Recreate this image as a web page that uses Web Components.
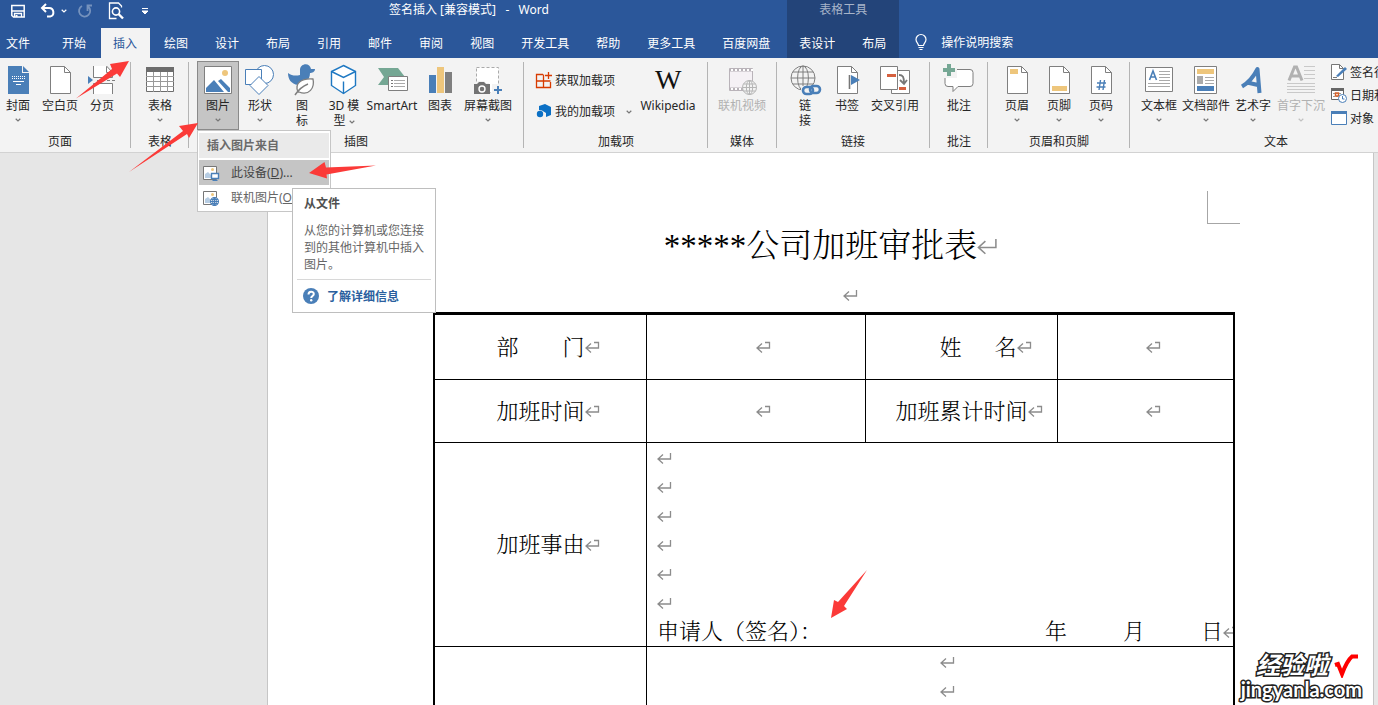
<!DOCTYPE html>
<html lang="zh-CN">
<head>
<meta charset="utf-8">
<title>签名插入 [兼容模式] - Word</title>
<style>
html, body { margin: 0; height: 100%; overflow: hidden; }
body { font: 12px/15px "Noto Sans", "Noto Sans CJK SC", sans-serif; color: #262626; background: #e6e6e6; }
</style>
</head>
<body>
<word-app></word-app>

<template id="app-template">
  <style>
    :host { display: flex; flex-direction: column; height: 100vh; min-height: 0; position: relative; overflow: hidden; }
    header { display: flex; background: #2b579a; color: #fff; flex: none; }
    .section { display: flex; flex-direction: column; }
    .main { padding-right: 4px; }
    .context { background: #234479; }
    .bar { height: 28px; display: flex; align-items: flex-start; }
    .tools { display: flex; align-items: center; height: 22px; width: 389px; flex: none; }
    .tools button { border: 0; padding: 0; background: none; display: flex; color: #fff; }
    .save { margin-left: 10px; }
    .undo { margin-left: 14px; }
    .undo-more { margin-left: 5px; }
    .redo { margin-left: 10px; opacity: .35; }
    .preview { margin-left: 14px; }
    .custom { margin-left: 16px; }
    h1 { margin: 0; font: inherit; line-height: 20px; white-space: pre; }
    .context .bar { justify-content: center; line-height: 20px; color: #a7b4c9; }
    nav { display: flex; gap: 2px; height: 30px; }
    .search { display: flex; align-items: center; gap: 12px; margin: 28px 0 0 14px; height: 28px; border: 0; padding: 0; background: none; color: #fff; font: inherit; }
    .ribbon { display: flex; flex: none; background: #f3f3f3; border-bottom: 1px solid #d2d2d2; height: 94px; position: relative; z-index: 2; }
    main { flex: 1; min-height: 0; display: flex; padding: 0 4px 0 267px; background: #e6e6e6; }
    .stack { display: flex; flex-direction: column; }
    .addins { gap: 15px; padding: 11px 4px 0 4px; }
    .fields { gap: 7px; padding: 3px 0 0 3px; width: 83px; }
  </style>
  <header>
    <div class="section main">
      <div class="bar">
        <div class="tools">
          <button class="save" aria-label="保存"><ms-icon name="save" size="16"></ms-icon></button>
          <button class="undo" aria-label="撤消"><ms-icon name="undo" size="16"></ms-icon></button>
          <button class="undo-more" aria-label="撤消列表"><ms-icon name="chevron" size="6"></ms-icon></button>
          <button class="redo" aria-label="恢复"><ms-icon name="redo" size="16"></ms-icon></button>
          <button class="preview" aria-label="打印预览"><ms-icon name="preview" size="18"></ms-icon></button>
          <button class="custom" aria-label="自定义快速访问工具栏"><ms-icon name="custom" size="8"></ms-icon></button>
        </div>
        <h1>签名插入 [兼容模式]   -   Word</h1>
      </div>
      <nav>
        <ribbon-tab file>文件</ribbon-tab><ribbon-tab>开始</ribbon-tab><ribbon-tab active>插入</ribbon-tab><ribbon-tab>绘图</ribbon-tab><ribbon-tab>设计</ribbon-tab><ribbon-tab>布局</ribbon-tab><ribbon-tab>引用</ribbon-tab><ribbon-tab>邮件</ribbon-tab><ribbon-tab>审阅</ribbon-tab><ribbon-tab>视图</ribbon-tab><ribbon-tab>开发工具</ribbon-tab><ribbon-tab>帮助</ribbon-tab><ribbon-tab>更多工具</ribbon-tab><ribbon-tab>百度网盘</ribbon-tab>
      </nav>
    </div>
    <div class="section context">
      <div class="bar">表格工具</div>
      <nav><ribbon-tab>表设计</ribbon-tab><ribbon-tab>布局</ribbon-tab></nav>
    </div>
    <button class="search"><ms-icon name="bulb" size="16"></ms-icon><span>操作说明搜索</span></button>
  </header>

  <div class="ribbon">
    <ribbon-group label="页面" style="--pl:0px;--pr:10px">
      <ribbon-button icon="cover" style="--w:36px" menu>封面</ribbon-button>
      <ribbon-button icon="blank" style="--w:48px">空白页</ribbon-button>
      <ribbon-button icon="break" style="--w:36px">分页</ribbon-button>
    </ribbon-group>
    <ribbon-group label="表格" style="--pl:8px">
      <ribbon-button icon="table" menu>表格</ribbon-button>
    </ribbon-group>
    <ribbon-group label="插图" style="--pl:8px;--pr:8px">
      <ribbon-button icon="picture" menu pressed>图片<picture-menu slot="popup"></picture-menu></ribbon-button>
      <ribbon-button icon="shapes" menu>形状</ribbon-button>
      <ribbon-button icon="duck">图<br>标</ribbon-button>
      <ribbon-button icon="cube">3D 模<br>型 <ms-icon name="chevron" size="6"></ms-icon></ribbon-button>
      <ribbon-button icon="smartart" style="--w:54px">SmartArt</ribbon-button>
      <ribbon-button icon="chart">图表</ribbon-button>
      <ribbon-button icon="capture" style="--w:54px" menu>屏幕截图</ribbon-button>
    </ribbon-group>
    <ribbon-group label="加载项" style="--pl:8px">
      <div class="stack addins">
        <ribbon-item icon="store">获取加载项</ribbon-item>
        <ribbon-item icon="addin" menu>我的加载项</ribbon-item>
      </div>
      <ribbon-button icon="wiki" style="--w:64px">Wikipedia</ribbon-button>
    </ribbon-group>
    <ribbon-group label="媒体">
      <ribbon-button icon="video" style="--w:54px" disabled>联机视频</ribbon-button>
    </ribbon-group>
    <ribbon-group label="链接">
      <ribbon-button icon="link">链<br>接</ribbon-button>
      <ribbon-button icon="bookmark">书签</ribbon-button>
      <ribbon-button icon="xref" style="--w:54px">交叉引用</ribbon-button>
    </ribbon-group>
    <ribbon-group label="批注" style="--pl:8px">
      <ribbon-button icon="comment">批注</ribbon-button>
    </ribbon-group>
    <ribbon-group label="页眉和页脚" style="--pl:8px">
      <ribbon-button icon="head" menu>页眉</ribbon-button>
      <ribbon-button icon="foot" menu>页脚</ribbon-button>
      <ribbon-button icon="number" menu>页码</ribbon-button>
    </ribbon-group>
    <ribbon-group label="文本" style="--pl:8px">
      <ribbon-button icon="textbox" menu>文本框</ribbon-button>
      <ribbon-button icon="parts" style="--w:52px" menu>文档部件</ribbon-button>
      <ribbon-button icon="wordart" menu>艺术字</ribbon-button>
      <ribbon-button icon="dropcap" style="--w:54px" menu disabled>首字下沉</ribbon-button>
      <div class="stack fields">
        <ribbon-item icon="sign">签名行</ribbon-item>
        <ribbon-item icon="date">日期和时间</ribbon-item>
        <ribbon-item icon="object">对象</ribbon-item>
      </div>
    </ribbon-group>
  </div>

  <main><doc-page></doc-page></main>
  <red-arrows></red-arrows>
  <site-mark></site-mark>
</template>

<template id="tab-template">
  <style>
    :host { display: block; }
    button { height: 30px; border: 0; margin: 0; padding: 0 13px 0 12px; background: none; color: #fff; font: inherit; white-space: nowrap; display: block; }
    :host([active]) button { background: #f3f3f3; color: #2b579a; }
    :host([file]) button { width: 48px; padding: 0 0 0 6px; text-align: left; }
  </style>
  <button><slot></slot></button>
</template>

<template id="group-template">
  <style>
    :host { display: flex; flex: none; padding: 3px 0 0; }
    section { display: flex; flex-direction: column; padding: 0 var(--pr, 7px) 0 var(--pl, 7px); }
    .items { display: flex; height: 73px; }
    .caption { text-align: center; white-space: nowrap; }
    .rule { width: 1px; height: 86px; margin-top: 1px; background: #b4b4b4; }
  </style>
  <section><div class="items"><slot></slot></div><div class="caption"></div></section>
  <div class="rule"></div>
</template>

<template id="button-template">
  <style>
    :host { display: block; position: relative; width: var(--w, 42px); height: 69px; }
    button { box-sizing: border-box; width: 100%; height: 69px; margin: 0; padding: 2px 0 0; border: 1px solid transparent; background: none; color: inherit; font: inherit; display: flex; flex-direction: column; align-items: center; white-space: nowrap; }
    :host([pressed]) button { background: #c5c5c5; border-color: #8a8a8a; }
    :host([disabled]) button { color: #b1b1b1; }
    .label { margin-top: 2px; }
    .chevron { display: flex; height: 14px; align-items: center; color: #777; }
    :host([disabled]) .chevron { color: #c1c1c1; }
    ::slotted(ms-icon) { color: #777; }
  </style>
  <button><ms-icon size="32"></ms-icon><span class="label"><slot></slot></span></button>
  <slot name="popup"></slot>
</template>

<template id="item-template">
  <style>
    :host { display: block; }
    button { display: flex; align-items: center; height: 16px; gap: 3px; border: 0; margin: 0; padding: 0; background: none; color: inherit; font: inherit; white-space: nowrap; }
    .chevron { margin-left: 8px; color: #777; }
  </style>
  <button><ms-icon size="16"></ms-icon><span><slot></slot></span></button>
</template>

<template id="menu-template">
  <style>
    :host { position: absolute; left: 0; top: 69px; width: 134px; box-sizing: border-box; display: block; background: #fff; border: 1px solid #c6c6c6; padding: 2px 1px 1px; z-index: 5; color: #444; }
    .head { background: #eaeaea; height: 25px; line-height: 25px; padding-left: 8px; margin-bottom: 2px; font-weight: bold; color: #6a6a6a; }
    button { display: flex; align-items: center; gap: 12px; width: 100%; height: 25px; padding: 0 4px; border: 0; background: none; font: inherit; color: #666; white-space: nowrap; }
    button.hot { background: #c5c5c5; color: #444; }
  </style>
  <div class="head">插入图片来自</div>
  <button class="hot"><ms-icon name="device" size="16"></ms-icon><span>此设备(<u>D</u>)...</span></button>
  <button><ms-icon name="online" size="16"></ms-icon><span>联机图片(<u>O</u>)</span></button>
  <screen-tip></screen-tip>
</template>

<template id="tip-template">
  <style>
    :host { position: absolute; left: 94px; top: 57px; width: 144px; height: 125px; box-sizing: border-box; display: block; background: #fff; border: 1px solid #bebebe; padding: 7px 4px 0; color: #666; }
    h2 { font: inherit; font-weight: bold; margin: 0 7px; color: #505050; }
    p { margin: 11px 0 6px 7px; width: 120px; line-height: 17px; }
    footer { border-top: 1px solid #d8d8d8; padding: 8px 0 0 6px; }
    a { display: flex; align-items: center; gap: 8px; color: #2a5f9e; font-weight: bold; text-decoration: none; }
  </style>
  <h2>从文件</h2>
  <p>从您的计算机或您连接到的其他计算机中插入图片。</p>
  <footer><a href="#help"><ms-icon name="help" size="16"></ms-icon>了解详细信息</a></footer>
</template>

<template id="page-template">
  <style>
    :host { display: block; flex: 1; min-width: 0; overflow: hidden; background: #fff; border: solid #c6c6c6; border-width: 0 1px; padding-top: 38px; color: #000; font: 22px/29px "Liberation Serif", "Noto Serif CJK SC", "Noto Sans CJK SC", serif; font-weight: 300; }
    .corner { width: 32px; height: 32px; margin: 0 133px 0 auto; border: solid #a6a6a6; border-width: 0 0 1px 1px; }
    h1 { font-size: 33px; line-height: 44px; height: 44px; font-weight: 300; margin: 0; text-align: center; }
    .empty { height: 29px; margin: 12px 0 3px; text-align: center; }
    .sheet { padding: 0 138px 0 165px; }
    table { width: 100%; table-layout: fixed; border-collapse: separate; border-spacing: 0; border: solid #000; border-width: 3px 2px 0; }
    td, th { padding: 0; border: solid #000; border-width: 0 1px 1px 0; text-align: center; font-weight: 300; box-sizing: border-box; white-space: nowrap; overflow: hidden; }
    tr > :last-child { border-right: 0; }
    .r1 { height: 65px; } .r2 { height: 63px; } .r3 { height: 204px; } .r4 { height: 204px; }
    .reason { text-align: left; padding: 0 10px; }
    .reason div { height: 29px; }
    .reason .sign { display: flex; justify-content: space-between; }
    .date { display: flex; gap: 56px; }
    .top { vertical-align: top; }
    .top div { height: 29px; }
  </style>
  <div class="corner"></div>
  <h1>*****公司加班审批表<para-mark size="large"></para-mark></h1>
  <div class="empty">&emsp;&emsp;<para-mark></para-mark></div>
  <div class="sheet">
    <table>
      <colgroup><col style="width:212px"><col style="width:219px"><col style="width:192px"><col></colgroup>
      <tr class="r1"><th>部&emsp;&emsp;门<para-mark cell></para-mark></th><td><para-mark cell></para-mark></td><th>&emsp;&ensp;姓&emsp;&ensp;名<para-mark cell></para-mark></th><td><para-mark cell></para-mark></td></tr>
      <tr class="r2"><th>加班时间<para-mark cell></para-mark></th><td><para-mark cell></para-mark></td><th>加班累计时间<para-mark cell></para-mark></th><td><para-mark cell></para-mark></td></tr>
      <tr class="r3"><th>加班事由<para-mark cell></para-mark></th>
        <td class="reason" colspan="3">
          <div><para-mark></para-mark></div><div><para-mark></para-mark></div><div><para-mark></para-mark></div>
          <div><para-mark></para-mark></div><div><para-mark></para-mark></div><div><para-mark></para-mark></div>
          <div class="sign"><span>申请人（签名）：</span><span class="date"><span>年</span><span>月</span><span>日<para-mark cell></para-mark></span></span></div>
        </td></tr>
      <tr class="r4"><th></th><td class="top" colspan="3"><div><para-mark></para-mark></div><div><para-mark></para-mark></div></td></tr>
    </table>
  </div>
</template>

<template id="mark-template">
  <style>
    :host { display: inline-block; width: 0; height: 18px; vertical-align: middle; line-height: 0; }
    svg { display: block; width: 15px; height: 14px; overflow: visible; fill: none; stroke: #8c8c8c; stroke-width: 1.3; }
    :host([size="large"]) { height: 26px; }
    :host([size="large"]) svg { width: 21px; height: 20px; stroke-width: 1.1; }
  </style>
  <svg viewBox="0 0 15 14"></svg>
</template>

<template id="arrows-template">
  <style>
    :host { position: absolute; left: 0; top: 0; pointer-events: none; z-index: 9; }
    svg { display: block; width: 1px; height: 1px; overflow: visible; fill: #fb3a38; }
  </style>
  <svg>
    <path d="M76 98.500 112 69 110 64 129 61 120 77 117 73.500z"/>
    <path d="M129 172 183 131 179 126 198 123 189 138 187 134z"/>
    <path d="M376 165.500 326 167.500 324.500 162 309 173 327 178.500 326.500 174.500z"/>
    <path d="M867 570 838 602 834 600 831 618 847 609 844 606z"/>
  </svg>
</template>

<template id="site-template">
  <style>
    :host { position: absolute; right: 16px; bottom: 6px; z-index: 8; display: flex; flex-direction: column; align-items: flex-end; color: #fff; font-family: "Liberation Sans", "Noto Sans CJK SC", sans-serif; font-weight: bold; -webkit-text-stroke: 3px #222; paint-order: stroke fill; }
    .top { display: flex; align-items: center; gap: 6px; padding-right: 4px; font-size: 24px; line-height: 26px; font-style: italic; }
    svg { width: 24px; height: 24px; fill: none; stroke: #f00; stroke-width: 4; }
    .url { font-family: Lato, "Liberation Sans", sans-serif; font-size: 20px; line-height: 20px; }
  </style>
  <div class="top"><span>经验啦</span><svg viewBox="0 0 24 24"><path d="M1 11 4 10 8 20C11 12 15 5 18 2.500H24"/></svg></div>
  <div class="url">jingyanla.com</div>
</template>

<script>
const B = '#4a7fb8', G = '#7f7f7f', Y = '#eec67c';
const sheet = (extra = '') => `<path d="M6.500 2.500h14l6 6v21h-20z" fill="#fff" stroke="${G}"/><path d="M20.500 2.500v6h6" fill="none" stroke="${G}"/>${extra}`;
const globe = (x, y, r, c, w = 1) => `<g fill="#f3f3f3" stroke="${c}" stroke-width="${w}"><circle cx="${x}" cy="${y}" r="${r}"/><ellipse cx="${x}" cy="${y}" rx="${r * .45}" ry="${r}" fill="none"/><path fill="none" d="M${x - r} ${y}h${2 * r}M${x - r * .86} ${y - r * .5}h${r * 1.72}M${x - r * .86} ${y + r * .5}h${r * 1.72}M${x} ${y - r}v${2 * r}"/></g>`;
const smallPic = `<path d="M.5 1.500h13v13h-13z" fill="#fff" stroke="#777"/><circle cx="9.500" cy="4.500" r="1.500" fill="${Y}"/><path d="M2 13V9l3-2 3 3v3z" fill="#b7cde3"/>`;
const ICONS = {
  save: [16, `<path d="M1.800 2.500h12.400v11.500H3.500L1.800 12.500z" fill="none" stroke="#fff" stroke-width="1.500"/><path d="M2 8h12M4.500 14V10.500h7V14" fill="none" stroke="#fff" stroke-width="1.300"/><path d="M5.500 12h2v2h-2z" fill="#fff"/>`],
  undo: [16, `<path d="M6 1 2 5l4 4M2.500 5H9a4.300 4.300 0 0 1 1 8.500H7" fill="none" stroke="#fff" stroke-width="2"/>`],
  redo: [16, `<path d="M11 3.500A5.600 5.600 0 1 1 5 3M10.500 8V2.500H15" fill="none" stroke="#fff" stroke-width="1.800"/>`],
  preview: [18, `<path d="M14.500 5.500V4l-3-3H2.500v15.500h7" fill="none" stroke="#fff" stroke-width="1.300"/><circle cx="9" cy="9.500" r="3.600" fill="none" stroke="#fff" stroke-width="1.600"/><path d="m11.500 12 4.500 4.500" stroke="#fff" stroke-width="2.400"/>`],
  custom: [8, `<path d="M1 1.500h6M1 4h6L4 7z" stroke="#fff" stroke-width="1" fill="#fff"/>`],
  bulb: [16, `<path d="M5.500 11.500C5.500 9.500 3 8.500 3 5.500a5 5 0 0 1 10 0c0 3-2.500 4-2.500 6zM5.500 13.500h5M6.500 15.500h3" fill="none" stroke="#fff" stroke-width="1.200"/>`],
  chevron: [6, `<path d="M.7 1.800 3 4 5.300 1.800" fill="none" stroke="currentColor" stroke-width="1.200"/>`],
  cover: [32, `<path d="M6 2h14v7h7v21H6z" fill="${B}"/><path d="M21 2v6h6z" fill="${B}"/><path d="M10 12.500h13M10 14.500h13" stroke="#fff" stroke-dasharray="1 1"/><path d="M11 17.500h11M14 20.500h5" stroke="#fff"/>`],
  blank: [32, sheet()],
  break: [32, `<path d="M7.500 2v11.500h19V8.500l-6-6.500z" fill="#fff"/><path d="M7.500 2v11.500h19V8.500l-6-6.500M20.500 2.500v6h6M7.500 30V19.500h19V30" fill="none" stroke="${G}"/><path d="M8 20h18v10H8z" fill="#fff"/><path d="M11 16.500h19" stroke="${G}" stroke-dasharray="3 2"/><path d="M2 12v8l5-4z" fill="${B}"/>`],
  table: [32, `<path d="M2.500 3.500h27v24h-27z" fill="#fff" stroke="#6d6d6d"/><path d="M2 3h28v5H2z" fill="#6d6d6d"/><path d="M2 12.500h28M2 17.500h28M2 22.500h28M9.500 8v20M16.500 8v20M23.500 8v20" stroke="#9a9a9a"/>`],
  picture: [32, `<path d="M2.500 2.500h27v27h-27z" fill="#fff" stroke="${G}"/><circle cx="23" cy="9" r="3" fill="${Y}"/><path d="M4 28v-4l8-8 10 12zM16 17l3-2 9 9v4h-2z" fill="${B}"/>`],
  shapes: [32, `<g fill="#fff" stroke="${B}"><circle cx="20.500" cy="10.500" r="9"/><path d="M1.500 5.500h16v15h-16z"/><path d="m15 12.500 9 9-9 9-9-9z"/></g>`],
  duck: [32, `<path d="M14 6c0-7 10-8 11-1l4 0c0 3-3 4-5 4 0 7-6 13-12 12C5 20 2 15 2 9c4 3 8 3 12 2z" fill="${B}"/><path d="M12 28c-4-9 4-14 15-13 2 9-4 17-14 13z" fill="#fff" stroke="${G}" stroke-width="1.300"/><path d="M9 31c4-6 8-9 13-11" fill="none" stroke="${G}" stroke-width="1.500"/>`],
  cube: [32, `<g fill="#fff" stroke="#1e78c2" stroke-width="1.400"><path d="m15.500 1.500 12 6v14l-12 8-12-8v-14z"/><path d="m3.500 7.500 12 6 12-6M15.500 29.500v-12" fill="none"/></g>`],
  smartart: [32, `<path d="M2 4h20l7 9-7 8H2l6-8z" fill="#75a794"/><path d="M12.500 12.500h19v14h-19z" fill="#fff" stroke="${G}"/><path d="M18 16.500h11M18 19.500h11M18 22.500h11" stroke="#aaa"/><path d="M15 16.500h2M15 19.500h2M15 22.500h2" stroke="#777"/>`],
  chart: [32, `<path d="M5 11h7v18H5z" fill="${B}"/><path d="M13 3h7v26h-7z" fill="${Y}"/><path d="M21 8h7v21h-7z" fill="${G}"/>`],
  capture: [32, `<path d="M4.500 3.500h22v25h-22z" fill="#fff" stroke="#aaa" stroke-dasharray="3 2"/><path d="M0 19h4l2-2h6l2 2h3v12H0z" fill="#f3f3f3"/><path d="M2 20h3l2-2h5l2 2h4v10H2z" fill="#737373"/><circle cx="10" cy="25" r="3" fill="none" stroke="#fff" stroke-width="1.400"/><path d="M20 20h12v12H20z" fill="#f3f3f3"/><path d="M26 22v8M22 26h8" stroke="${B}" stroke-width="2"/>`],
  store: [16, `<path d="M7 2.500H.5v13h14V10M.5 9h14M7.500 2.500v13M12.500 0v7M9 3.500h7" fill="none" stroke="#d83b01" stroke-width="1.300"/>`],
  addin: [16, `<path d="m9 1 6 3v8l-5 2V10L6 7.500 3 7V3z" fill="#0b70c5"/><circle cx="4" cy="11" r="3.200" fill="#0b70c5"/>`],
  wiki: [32, `<text x="3" y="25" font-family="Liberation Serif, serif" font-size="28" fill="#111" stroke="none">W</text>`],
  video: [32, `<path d="M3.500 4.500h23v22h-23z" fill="#f5f1f5" stroke="#b9b3b9"/><path d="M4 6h22M4 25h22" stroke="#b9b3b9" stroke-width="3"/><path d="M5 6h22M5 25h10" stroke="#fff" stroke-dasharray="2 2" stroke-width="2"/>${globe(23.500, 23.500, 7, '#b5b5b5')}`],
  link: [32, `${globe(14, 14, 12, G)}<path d="M12 22h20v9H12z" fill="#f3f3f3"/><g fill="none" stroke="${B}" stroke-width="2.600"><rect x="14" y="23" width="10" height="7" rx="3.500"/><rect x="21" y="22" width="10" height="7" rx="3.500"/></g>`],
  bookmark: [32, sheet(`<path d="M18.500 11v14" stroke="#777" stroke-width="1.600"/><path d="M20 11v10l9-5z" fill="${B}"/>`)],
  xref: [32, `<path d="M12.500 6.500h18v23h-18z" fill="#fff" stroke="${G}"/><path d="M1.500 2.500h17v23h-17z" fill="#fff" stroke="${G}"/><path d="M8 10h9v3H8zM20 23h7v3h-7z" fill="#d5603f"/><path d="M20 11c4 0 5 2 5 8M21 16l4 4 3-4" fill="none" stroke="#777" stroke-width="1.800"/>`],
  comment: [32, `<path d="M5 5.500h22q3 0 3 3v11q0 3-3 3H15l-5 5v-5H5q-3 0-3-3v-11q0-3 3-3z" fill="#fff" stroke="${G}"/><path d="M0 0h14v14H0z" fill="#f3f3f3"/><path d="M6 0v12M0 6h12" stroke="#75a794" stroke-width="4"/>`],
  head: [32, sheet(`<path d="M9 5h8v5H9z" fill="${Y}"/>`)],
  foot: [32, sheet(`<path d="M9 22h15v5H9z" fill="${Y}"/>`)],
  number: [32, sheet(`<path d="m15.500 16-1.500 10m5.500-10L18 26M12 19h9M11.500 23h9" stroke="${B}" stroke-width="1.400"/>`)],
  textbox: [32, `<path d="M2.500 3.500h27v24h-27z" fill="#fff" stroke="${G}"/><path d="m6.500 16 3.500-9 3.500 9M8 13h4.500" fill="none" stroke="${B}" stroke-width="1.600"/><path d="M16 7.500h11M16 10.500h11M16 13.500h11M16 16.500h11M5 19.500h22M5 22.500h22" stroke="#aaa"/>`],
  parts: [32, `<path d="M4.500 2.500h22v27h-22z" fill="#fff" stroke="${G}"/><path d="M7 5h17v5H7z" fill="${Y}"/><path d="M7 12h6v8H7z" fill="#aaa"/><path d="M15 13.500h9M15 16.500h9M15 19.500h9" stroke="#aaa"/><path d="M7 22h17v5H7z" fill="${B}"/>`],
  wordart: [32, `<path d="M5 22.500C11 19 17 12 20.500 5l2 24M10 18.500 21 21" fill="none" stroke="${B}" stroke-width="4" stroke-linejoin="round"/>`],
  dropcap: [32, `<path d="M4 16.500 9.500 3h2L17 16.500M7 12h8" fill="none" stroke="#b1b1b1" stroke-width="3"/><path d="M19 2.500h11M19 6.500h11M19 10.500h11M19 14.500h11M2 19.500h28M2 22.500h28M2 25.500h28M2 28.500h28" stroke="#c9c9c9"/>`],
  sign: [16, `<path d="M.5.500h8l4 4v11H.5z" fill="#fff" stroke="#777"/><path d="M8.500.5v4h4" fill="none" stroke="#777"/><path d="m5 12 9-9 2 2-9 8z" fill="${B}"/><path d="M2 13.500h4" stroke="#777"/>`],
  date: [16, `<path d="M.5 1.500h12v11H.5z" fill="#fff" stroke="#666"/><path d="M0 1h13v3H0z" fill="#666"/><path d="M2 6.500h9M2 9.500h9" stroke="#999" stroke-dasharray="2 1"/><path d="M4.500 6h3v3h-3z" fill="none" stroke="#d8632b" stroke-width="1.500"/><circle cx="11.500" cy="11.500" r="4" fill="#fff" stroke="${B}"/><path d="M11.500 9v3h2" fill="none" stroke="${B}"/>`],
  object: [16, `<path d="M.5 1.500h15v13H.5z" fill="#fff" stroke="${B}"/><path d="M0 1h16v3H0z" fill="${B}"/>`],
  device: [16, `${smallPic}<path d="M8.500 8.500h7v5h-7z" fill="#fff" stroke="${B}" stroke-width="1.400"/><path d="M12 14v1.500M9.500 15.500h5" stroke="${B}"/>`],
  online: [16, `${smallPic}${globe(11.500, 11.500, 4, B, 1.100)}`],
  help: [16, `<circle cx="8" cy="8" r="8" fill="${B}"/><path d="M5.500 6.500C5.500 2.800 10.800 3 10.800 6 10.800 8 8.200 8 8.200 10" fill="none" stroke="#fff" stroke-width="2"/><circle cx="8.200" cy="12.300" r="1.200" fill="#fff"/>`]
};

class Base extends HTMLElement {
  constructor() {
    super();
    const id = this.constructor.template;
    this.attachShadow({ mode: 'open' }).append(document.getElementById(id).content.cloneNode(true));
  }
  $(selector) { return this.shadowRoot.querySelector(selector); }
}
class MsIcon extends HTMLElement {
  static observedAttributes = ['name', 'size'];
  constructor() { super(); this.attachShadow({ mode: 'open' }); }
  attributeChangedCallback() {
    const icon = ICONS[this.getAttribute('name')], size = this.getAttribute('size');
    if (!icon || !size) return;
    this.shadowRoot.innerHTML = `<style>:host{display:inline-block;flex:none;width:${size}px;height:${size}px;vertical-align:middle}svg{display:block;width:100%;height:100%;overflow:visible}</style><svg viewBox="0 0 ${icon[0]} ${icon[0]}" aria-hidden="true">${icon[1]}</svg>`;
  }
}
const chevron = () => {
  const box = document.createElement('span');
  box.className = 'chevron';
  box.innerHTML = '<ms-icon name="chevron" size="6"></ms-icon>';
  return box;
};
class RibbonControl extends Base {
  connectedCallback() {
    this.$('ms-icon').setAttribute('name', this.getAttribute('icon'));
    if (this.hasAttribute('menu') && !this.$('.chevron')) this.$('button').append(chevron());
    if (this.hasAttribute('disabled')) this.$('button').disabled = true;
  }
}
class RibbonButton extends RibbonControl { static template = 'button-template'; }
class RibbonItem extends RibbonControl { static template = 'item-template'; }
class RibbonTab extends Base { static template = 'tab-template'; }
class RibbonGroup extends Base {
  static template = 'group-template';
  connectedCallback() { this.$('.caption').textContent = this.getAttribute('label'); }
}
class PictureMenu extends Base { static template = 'menu-template'; }
class ScreenTip extends Base { static template = 'tip-template'; }
class ParaMark extends Base {
  static template = 'mark-template';
  connectedCallback() {
    this.$('svg').innerHTML = this.hasAttribute('cell')
      ? '<path d="M6 3.500 1 8l5 4.500M1 8h12.500V2.500H9"/>'
      : '<path d="M6 3.500 1 8l5 4.500M1 8h12.500V2"/>';
  }
}
class DocPage extends Base { static template = 'page-template'; }
class RedArrows extends Base { static template = 'arrows-template'; }
class SiteMark extends Base { static template = 'site-template'; }
class WordApp extends Base { static template = 'app-template'; }

customElements.define('ms-icon', MsIcon);
customElements.define('ribbon-tab', RibbonTab);
customElements.define('ribbon-group', RibbonGroup);
customElements.define('ribbon-button', RibbonButton);
customElements.define('ribbon-item', RibbonItem);
customElements.define('screen-tip', ScreenTip);
customElements.define('picture-menu', PictureMenu);
customElements.define('para-mark', ParaMark);
customElements.define('doc-page', DocPage);
customElements.define('red-arrows', RedArrows);
customElements.define('site-mark', SiteMark);
customElements.define('word-app', WordApp);
</script>
</body>
</html>
